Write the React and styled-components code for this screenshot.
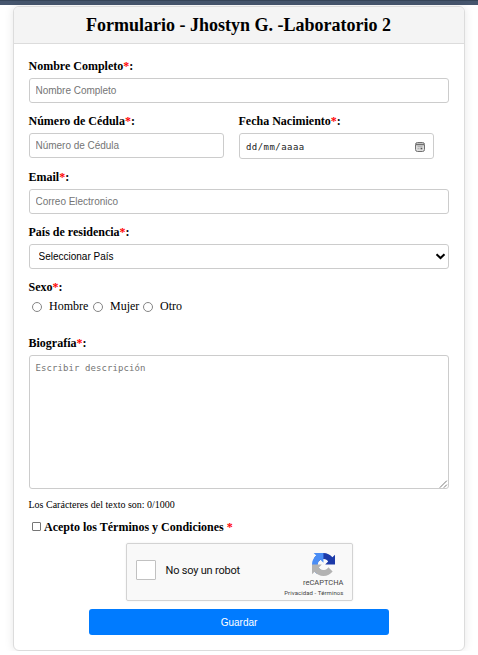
import React from "react";
import styled, { createGlobalStyle } from "styled-components";

const Global = createGlobalStyle`
  *, *::before, *::after { box-sizing: border-box; }
  body { margin: 0; background: #fff; font-family: "Liberation Serif", "Times New Roman", serif; color: #000; overflow: hidden; }
`;

const TopBar = styled.div`
  height: 5px;
  background: #46566e;
  border-top: 1px solid #364559;
`;

const Card = styled.form`
  width: 452px;
  height: 645px;
  margin: 1px 0 0 13px;
  border: 1px solid #dcdcdc;
  border-radius: 6px;
  box-shadow: 0 0 10px rgba(0, 0, 0, 0.1);
  background: #fff;
  overflow: hidden;
`;

const Header = styled.header`
  height: 37px;
  padding-right: 1px;
  background: #f4f4f4;
  border-bottom: 1px solid #dcdcdc;
  display: flex;
  align-items: center;
  justify-content: center;
`;

const Title = styled.h1`
  margin: 0;
  font-size: 18px;
  line-height: 20px;
  white-space: nowrap;
`;

const Body = styled.div`
  padding: 15px 15px 0 15px;
  display: flex;
  flex-direction: column;
`;

const Field = styled.div`
  display: flex;
  flex-direction: column;
  width: ${(p) => p.$width || "100%"};
  margin-bottom: ${(p) => p.$after || "11px"};
`;

const Row = styled.div`
  display: flex;
  gap: 15px;
  height: 56px;
`;

const Label = styled.label`
  height: 14px;
  line-height: 14px;
  margin: 0 0 5px -0.5px;
  font-size: 12px;
  font-weight: bold;
  white-space: nowrap;
`;

const Star = styled.span`
  color: #f00;
`;

const Input = styled.input`
  width: 100%;
  height: 25px;
  padding: 0 5.5px;
  border: 1px solid #ccc;
  border-radius: 3px;
  background: #fff;
  outline: none;
  font: 10px "Liberation Sans", Arial, sans-serif;
  letter-spacing: -0.02px;
  &::placeholder { color: #757575; opacity: 1; }
`;

const DateBox = styled.div`
  height: 27px;
  padding: 1px 8px 0 6px;
  border: 1px solid #ccc;
  border-radius: 3px;
  display: flex;
  align-items: center;
  justify-content: space-between;
  font: 9px "DejaVu Sans Mono", monospace;
  letter-spacing: 0.45px;
  color: #222;
`;

const SelectWrap = styled.div`
  position: relative;
  height: 25px;
`;

const Select = styled.select`
  appearance: none;
  display: block;
  width: 100%;
  height: 25px;
  padding: 0 8.5px;
  border: 1px solid #ccc;
  border-radius: 3px;
  background: #fff;
  color: #000;
  font: 10px "Liberation Sans", Arial, sans-serif;
`;

const Chevron = styled.svg`
  position: absolute;
  right: 3px;
  top: 8px;
`;

const Radios = styled.div`
  display: flex;
  height: 14px;
  margin: 0 0 0 3px;
`;

const RadioLabel = styled.label`
  display: flex;
  gap: 7px;
  font-size: 12px;
  line-height: 14px;
  width: ${(p) => p.$width};
  white-space: nowrap;
`;

const Radio = styled.input`
  appearance: none;
  flex: none;
  width: 10px;
  height: 10px;
  margin: 3px 0 0;
  border: 1px solid #858585;
  border-radius: 50%;
`;

const TextArea = styled.textarea`
  display: block;
  width: 100%;
  height: 134px;
  padding: 6px 5.5px;
  border: 1px solid #ccc;
  border-radius: 3px;
  outline: none;
  resize: none;
  font: 9px/12px "DejaVu Sans Mono", monospace;
  letter-spacing: 0.08px;
  &::placeholder { color: #757575; opacity: 1; }
`;

const AreaWrap = styled.div`
  position: relative;
`;

const Grip = styled.svg`
  position: absolute;
  right: 1px;
  bottom: 1px;
`;

const Counter = styled.p`
  margin: 10px 0 0 -0.5px;
  height: 12px;
  font-size: 10px;
  line-height: 12px;
`;

const Terms = styled.label`
  display: flex;
  align-items: center;
  gap: 3px;
  margin: 9px 0 0 3px;
  height: 14px;
  font-size: 12px;
  font-weight: bold;
  line-height: 14px;
  white-space: pre;
`;

const Check = styled.input`
  appearance: none;
  flex: none;
  width: 9px;
  height: 9px;
  margin: -1px 0 0;
  border: 1px solid #767676;
  border-radius: 1px;
`;

const Captcha = styled.section`
  align-self: center;
  width: 227px;
  height: 58px;
  margin-top: 9px;
  padding-left: 9px;
  display: flex;
  align-items: center;
  background: #f9f9f9;
  border: 1px solid #d3d3d3;
  border-radius: 2px;
  box-shadow: 0 0 2px rgba(0, 0, 0, 0.08);
  font-family: Roboto, sans-serif;
`;

const CaptchaBox = styled.input`
  appearance: none;
  width: 20px;
  height: 20px;
  margin: -4px 10px 0 0;
  border: 1px solid #c1c1c1;
  border-radius: 1px;
  background: #fff;
`;

const CaptchaText = styled.span`
  flex: 1;
  margin-top: -4px;
  font-size: 11px;
  letter-spacing: -0.2px;
  white-space: nowrap;
  color: #111;
`;

const Brand = styled.div`
  width: 78px;
  height: 56px;
  padding: 9px 8px 0 0;
  display: flex;
  flex-direction: column;
  align-items: flex-end;
  white-space: nowrap;
  color: #444;
`;

const BrandLogo = styled.svg`
  flex: none;
  margin-right: 9px;
`;

const BrandName = styled.span`
  font-size: 7.5px;
  line-height: 9px;
  margin-top: 2px;
`;

const Legal = styled.span`
  font-size: 6px;
  line-height: 8px;
  margin-top: 2px;
  letter-spacing: 0.08px;
`;

const Save = styled.button`
  align-self: center;
  width: 300px;
  height: 26px;
  margin-top: 8px;
  padding: 0;
  border: 0;
  border-radius: 3px;
  background: #007bff;
  color: #fff;
  font: 10px "Liberation Sans", Arial, sans-serif;
`;

function Caption({ children }) {
  return <Label>{children}<Star>*</Star>:</Label>;
}

function CalendarIcon() {
  return (
    <svg width="10" height="10" viewBox="0 0 10 10" fill="none" stroke="#707070">
      <rect x="0.5" y="0.5" width="9" height="9" rx="2" fill="#ddd" />
      <path d="M1 2.500h8" strokeWidth="1.400" />
      <path d="M2.500 4.700h5M2.500 6.700h2" stroke="#aaa" />
      <rect x="5.600" y="5.800" width="1.700" height="1.500" fill="#555" stroke="none" />
    </svg>
  );
}

function RecaptchaLogo() {
  return (
    <BrandLogo width="23" height="23" viewBox="0 0 64 64">
      <path fill="#1c3aa9" d="M64 31.955l-.033-1.37V4.687l-7.16 7.16C50.948 4.674 42.033.093 32.05.093c-10.4 0-19.622 4.96-25.458 12.64l11.736 11.86a15.55 15.55 0 0 1 4.754-5.334c2.05-1.6 4.952-2.906 8.968-2.906.485 0 .86.057 1.135.163 4.976.393 9.288 3.14 11.828 7.124l-8.307 8.307L64 31.953" />
      <path fill="#4a8df5" d="M31.862.094l-1.37.033H4.594l7.16 7.16C4.58 13.147 0 22.06 0 32.046c0 10.4 4.96 19.622 12.64 25.458L24.5 45.768a15.55 15.55 0 0 1-5.334-4.754c-1.6-2.05-2.906-4.952-2.906-8.968 0-.485.057-.86.163-1.135.393-4.976 3.14-9.288 7.124-11.828l8.307 8.307L31.86.095" />
      <path fill="#b3b3b3" d="M.001 32.045l.033 1.37v25.898l7.16-7.16c5.86 7.173 14.774 11.754 24.76 11.754 10.4 0 19.622-4.96 25.458-12.64l-11.736-11.86a15.55 15.55 0 0 1-4.754 5.334c-2.05 1.6-4.952 2.906-8.968 2.906-.485 0-.86-.057-1.135-.163-4.976-.393-9.288-3.14-11.828-7.124l8.307-8.307z" />
    </BrandLogo>
  );
}

export default function App() {
  return (
    <>
      <Global />
      <TopBar />
      <Card>
        <Header><Title>Formulario - Jhostyn G. -Laboratorio 2</Title></Header>
        <Body>
          <Field>
            <Caption>Nombre Completo</Caption>
            <Input placeholder="Nombre Completo" />
          </Field>
          <Row>
            <Field $width="195px">
              <Caption>Número de Cédula</Caption>
              <Input placeholder="Número de Cédula" />
            </Field>
            <Field $width="195px">
              <Caption>Fecha Nacimiento</Caption>
              <DateBox><span>dd/mm/aaaa</span><CalendarIcon /></DateBox>
            </Field>
          </Row>
          <Field>
            <Caption>Email</Caption>
            <Input placeholder="Correo Electronico" />
          </Field>
          <Field>
            <Caption>País de residencia</Caption>
            <SelectWrap>
              <Select><option>Seleccionar País</option></Select>
              <Chevron width="11" height="9" viewBox="0 0 11 9" fill="none" stroke="#000" strokeWidth="2">
                <path d="M1.500 2.200l4 3.800l4-3.800" />
              </Chevron>
            </SelectWrap>
          </Field>
          <Field $after="23px">
            <Caption>Sexo</Caption>
            <Radios>
              <RadioLabel $width="61px"><Radio type="radio" name="sexo" />Hombre</RadioLabel>
              <RadioLabel $width="50px"><Radio type="radio" name="sexo" />Mujer</RadioLabel>
              <RadioLabel $width="50px"><Radio type="radio" name="sexo" />Otro</RadioLabel>
            </Radios>
          </Field>
          <Field $after="0">
            <Caption>Biografía</Caption>
            <AreaWrap>
              <TextArea placeholder="Escribir descripción" />
              <Grip width="9" height="9" viewBox="0 0 9 9" stroke="#333" strokeWidth="0.9">
                <path d="M1 8.500L8 1.500M5 8.500L8 5.500" strokeDasharray="1.100 0.300" />
              </Grip>
            </AreaWrap>
          </Field>
          <Counter>Los Carácteres del texto son: 0/1000</Counter>
          <Terms><Check type="checkbox" /><span>Acepto los Términos y Condiciones <Star>*</Star></span></Terms>
          <Captcha>
            <CaptchaBox type="checkbox" />
            <CaptchaText>No soy un robot</CaptchaText>
            <Brand>
              <RecaptchaLogo />
              <BrandName>reCAPTCHA</BrandName>
              <Legal>Privacidad - Términos</Legal>
            </Brand>
          </Captcha>
          <Save type="button">Guardar</Save>
        </Body>
      </Card>
    </>
  );
}
